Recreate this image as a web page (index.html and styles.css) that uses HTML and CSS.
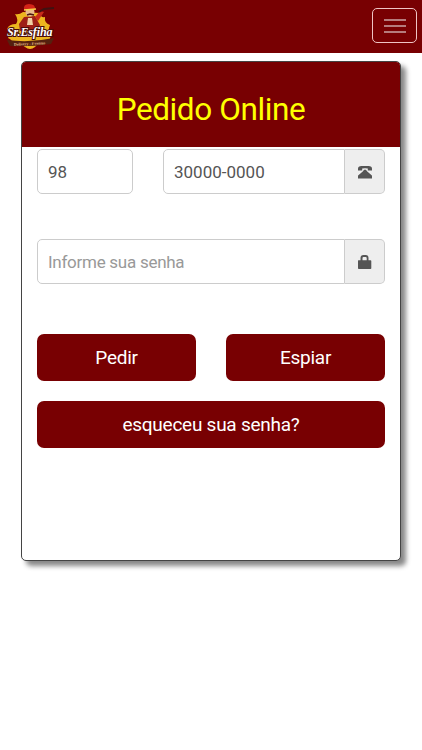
FILE: index.html
```html
<!DOCTYPE html>
<html lang="pt-br">
<head>
  <meta charset="UTF-8">
  <meta name="viewport" content="width=device-width, initial-scale=1">
  <title>Sr. Esfiha - Pedido Online</title>
  <link rel="stylesheet" href="styles.css">
</head>
<body>

  <!-- Barra superior -->
  <nav class="navbar">
    <a href="#" class="logo">
      <svg width="60" height="52" viewBox="0 0 60 52">
        <path d="M14 14 Q18 15 22 12 L38 13 Q40 18 44 17 Q43 23 49 25 Q46 32 50 35 Q48 44 43 43 Q37 43 34 47 Q29 51 24 47 Q20 43 13 46 Q12 40 7 38 Q10 33 6 29 Q8 24 15 24 Q18 20 14 14 Z" fill="#edb51f"/>
        <path d="M18 24 L23 17 L34 16 L39 25 L37 31 L19 31 Z" fill="#9e2017"/>
        <path d="M34 17 L39 11 L43 12 L37 21 Z" fill="#c92b1a"/>
        <path d="M38 12 L43 9 L53 8" fill="none" stroke="#3e1212" stroke-width="2"/>
        <circle cx="29" cy="12" r="4.5" fill="#e9b98e"/>
        <path d="M23 10 Q22 4 28 4 Q35 4 34 10 Z" fill="#d32318"/>
        <path d="M23 10 L35 9" stroke="#f4d34c" stroke-width="1.3"/>
        <path d="M26 15 L29 14 L33 15" fill="none" stroke="#4b1710" stroke-width="1.4"/>
        <path d="M27 18 L31 18 L32 25 L26 25 Z" fill="#f0d1a5"/>
        <path d="M6 40 Q29 43 53 38 L50 44 Q29 47 9 46 Z" fill="#55200f"/>
        <text class="logo-name" x="6" y="36">Sr.Esfiha</text>
        <text class="logo-sub" x="13" y="45" transform="rotate(-3 29 44)">Delivery - Eventos</text>
      </svg>
    </a>
    <button class="navbar-toggle" type="button" aria-label="Menu">
      <span class="icon-bar"></span>
      <span class="icon-bar"></span>
      <span class="icon-bar"></span>
    </button>
  </nav>

  <!-- Login -->
  <div class="card">
    <h1 class="card-title">Pedido Online</h1>
    <form class="card-body">
      <div class="row phone">
        <input class="field ddd" type="text" value="98" aria-label="DDD">
        <div class="input-group">
          <input class="field" type="text" value="30000-0000" aria-label="Telefone">
          <span class="addon">
            <svg width="16" height="16" viewBox="0 0 16 16">
              <path d="M1 6.4 V4.8 Q1 2 4.5 2 H11.5 Q15 2 15 4.8 V6.4 H10.8 V4.5 Q8 3.9 5.2 4.5 V6.4 Z"/>
              <path d="M7 5.8 H9 L10 7.3 L14.6 11.2 Q15 11.5 15 12 V14.5 H1 V12 Q1 11.5 1.4 11.2 L6 7.3 Z"/>
            </svg>
          </span>
        </div>
      </div>
      <div class="row password">
        <div class="input-group">
          <input class="field" type="password" placeholder="Informe sua senha">
          <span class="addon">
            <svg width="16" height="16" viewBox="0 0 16 16">
              <path fill-rule="evenodd" d="M1.3 6.2 H3.5 V4 Q3.5 1 6.5 1 H8.8 Q11.5 1 11.5 4 V6.2 H13.5 Q14.3 6.2 14.3 7 V14.2 Q14.3 15 13.5 15 H1.8 Q1 15 1 14.2 V6.8 Z M5.5 6.2 H9.7 V4.2 Q9.7 3 8.7 3 H6.5 Q5.5 3 5.5 4.2 Z"/>
            </svg>
          </span>
        </div>
      </div>
      <div class="row actions">
        <button class="btn" type="button">Pedir</button>
        <button class="btn" type="button">Espiar</button>
      </div>
      <button class="btn" type="button">esqueceu sua senha?</button>
    </form>
  </div>

</body>
</html>
```
FILE: styles.css
```css
* {
  box-sizing: border-box;
}

body {
  margin: 0;
  min-height: 100vh;
  background-color: #fff;
  font-family: Roboto, sans-serif;
}

.navbar {
  display: flex;
  justify-content: space-between;
  align-items: flex-start;
  height: 53px;
  padding-right: 5px;
  background-color: #780002;
}

.logo {
  margin-left: 1px;
}

.logo svg {
  display: block;
  overflow: visible;
}

.logo-name {
  font: italic bold 12px "Liberation Serif", serif;
  letter-spacing: -0.1px;
  fill: #fff;
  stroke: #4a0b08;
  stroke-width: 2px;
  paint-order: stroke;
}

.logo-sub {
  font: bold 4px "Liberation Serif", serif;
  fill: #e6bd8c;
}

.navbar-toggle {
  display: flex;
  flex-direction: column;
  justify-content: center;
  align-items: center;
  gap: 4px;
  width: 45px;
  height: 35px;
  margin-top: 8px;
  padding: 0;
  background: transparent;
  border: 1px solid #efc4c4;
  border-radius: 5px;
}

.icon-bar {
  width: 22px;
  height: 2px;
  background-color: #b67c7d;
}

.card {
  height: 500px;
  margin: 8px 21px 0;
  overflow: hidden;
  background-color: #fff;
  border: 1px solid #444;
  border-radius: 5px;
  box-shadow: 5px 5px 5px #888;
}

.card-title {
  height: 85px;
  margin: 0;
  padding-top: 10px;
  background-color: #780002;
  color: #ff0;
  font-size: 31.5px;
  font-weight: 400;
  letter-spacing: -0.4px;
  line-height: 75px;
  text-align: center;
}

.card-body {
  padding: 2px 15px 0;
}

.row {
  display: flex;
  gap: 30px;
}

.phone {
  margin-bottom: 45px;
}

.password {
  margin-bottom: 50px;
}

.actions {
  margin-bottom: 20px;
}

.input-group {
  display: flex;
  flex: 1;
  min-width: 0;
}

.field {
  flex: 1;
  min-width: 0;
  height: 45px;
  padding: 0 10px;
  background-color: #fff;
  border: 1px solid #ccc;
  border-radius: 5px;
  color: #555;
  font-family: inherit;
  font-size: 17px;
}

.field::placeholder {
  color: #999;
  letter-spacing: -0.27px;
}

.ddd {
  flex: 0 0 96px;
}

.input-group .field {
  border-radius: 5px 0 0 5px;
}

.addon {
  display: flex;
  justify-content: center;
  align-items: center;
  width: 40px;
  background-color: #eee;
  border: 1px solid #ccc;
  border-left: 0;
  border-radius: 0 5px 5px 0;
}

.addon svg {
  fill: #555;
}

.btn {
  flex: 1;
  width: 100%;
  height: 47px;
  padding: 0;
  background-color: #780002;
  border: 0;
  border-radius: 7px;
  color: #fff;
  font-family: inherit;
  font-size: 19px;
  letter-spacing: -0.25px;
}
```
